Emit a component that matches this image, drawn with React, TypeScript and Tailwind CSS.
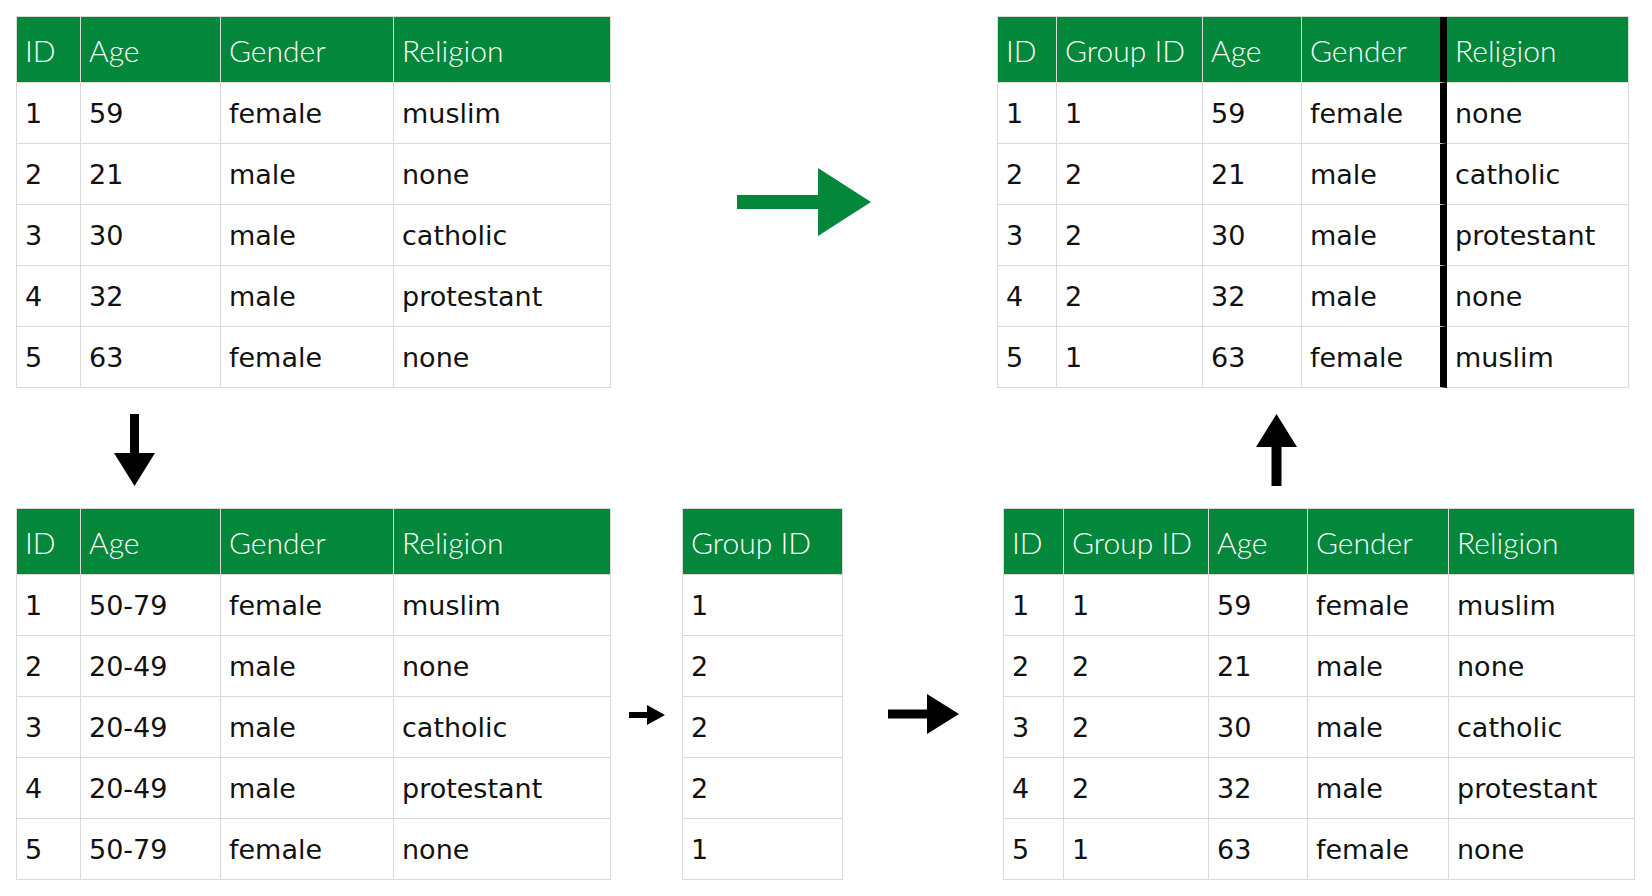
import React from "react";

type Row = string[];

const headCell =
  "flex h-[66px] items-center border-b border-r border-[#d9d9d9] bg-[#02873b] pl-[8px] font-[family-name:Lato,sans-serif] text-[30px] font-light leading-none text-white";
const bodyCell =
  "flex h-[61px] items-center border-b border-r border-[#d9d9d9] bg-white pl-[8px] font-[family-name:'DejaVu_Sans',sans-serif] text-[27px] leading-none text-[#111]";
const divLine = "border-r-[7px] border-r-black";

function DataTable({
  cols,
  headers,
  rows,
  divider,
  className = "",
}: {
  cols: string;
  headers: string[];
  rows: Row[];
  divider?: number;
  className?: string;
}) {
  const edge = (i: number) => (divider === i ? divLine : "");
  return (
    <div className={`grid shrink-0 border-l border-t border-[#d9d9d9] ${cols} ${className}`}>
      {headers.map((h, i) => (
        <div key={`h${i}`} className={`${headCell} ${edge(i)}`}>
          {h}
        </div>
      ))}
      {rows.map((r, ri) =>
        r.map((v, ci) => (
          <div key={`${ri}-${ci}`} className={`${bodyCell} ${edge(ci)}`}>
            {v}
          </div>
        ))
      )}
    </div>
  );
}

const original: Row[] = [
  ["1", "59", "female", "muslim"],
  ["2", "21", "male", "none"],
  ["3", "30", "male", "catholic"],
  ["4", "32", "male", "protestant"],
  ["5", "63", "female", "none"],
];

const binned: Row[] = [
  ["1", "50-79", "female", "muslim"],
  ["2", "20-49", "male", "none"],
  ["3", "20-49", "male", "catholic"],
  ["4", "20-49", "male", "protestant"],
  ["5", "50-79", "female", "none"],
];

const groups: Row[] = [["1"], ["2"], ["2"], ["2"], ["1"]];

const grouped: Row[] = [
  ["1", "1", "59", "female", "muslim"],
  ["2", "2", "21", "male", "none"],
  ["3", "2", "30", "male", "catholic"],
  ["4", "2", "32", "male", "protestant"],
  ["5", "1", "63", "female", "none"],
];

const shuffled: Row[] = [
  ["1", "1", "59", "female", "none"],
  ["2", "2", "21", "male", "catholic"],
  ["3", "2", "30", "male", "protestant"],
  ["4", "2", "32", "male", "none"],
  ["5", "1", "63", "female", "muslim"],
];

export default function App() {
  return (
    <div className="h-[896px] w-[1652px] overflow-hidden bg-white">
      {/* top row */}
      <div className="flex items-start pl-[16px] pt-[16px]">
        <DataTable
          cols="grid-cols-[64px_140px_173px_217px]"
          headers={["ID", "Age", "Gender", "Religion"]}
          rows={original}
        />
        <svg className="ml-[126px] mt-[152px] shrink-0" width="134" height="68" viewBox="0 0 134 68">
          <path d="M0 27H81V0L134 34L81 68V41H0Z" fill="#02873b" />
        </svg>
        <DataTable
          className="ml-[126px]"
          cols="grid-cols-[59px_146px_99px_145px_182px]"
          headers={["ID", "Group ID", "Age", "Gender", "Religion"]}
          rows={shuffled}
          divider={3}
        />
      </div>

      {/* vertical arrows */}
      <div className="flex items-start pt-[26px]">
        <svg className="ml-[114px] shrink-0" width="41" height="72" viewBox="0 0 41 72">
          <path d="M16 0H25V39H41L20.5 72L0 39H16Z" fill="#000" />
        </svg>
        <svg className="ml-[1101px] shrink-0" width="41" height="72" viewBox="0 0 41 72">
          <path d="M20.5 0L41 33H25.5V72H15.5V33H0Z" fill="#000" />
        </svg>
      </div>

      {/* bottom row */}
      <div className="flex items-start pl-[16px] pt-[22px]">
        <DataTable
          cols="grid-cols-[64px_140px_173px_217px]"
          headers={["ID", "Age", "Gender", "Religion"]}
          rows={binned}
        />
        <svg className="ml-[18px] mt-[197px] shrink-0" width="36" height="20" viewBox="0 0 36 20">
          <path d="M0 7H18V0L36 10L18 20V13H0Z" fill="#000" />
        </svg>
        <DataTable
          className="ml-[17px]"
          cols="grid-cols-[160px]"
          headers={["Group ID"]}
          rows={groups}
        />
        <svg className="ml-[45px] mt-[186px] shrink-0" width="71" height="40" viewBox="0 0 71 40">
          <path d="M0 15.5H39V0L71 20L39 40V24.5H0Z" fill="#000" />
        </svg>
        <DataTable
          className="ml-[44px]"
          cols="grid-cols-[60px_145px_99px_141px_186px]"
          headers={["ID", "Group ID", "Age", "Gender", "Religion"]}
          rows={grouped}
        />
      </div>
    </div>
  );
}
